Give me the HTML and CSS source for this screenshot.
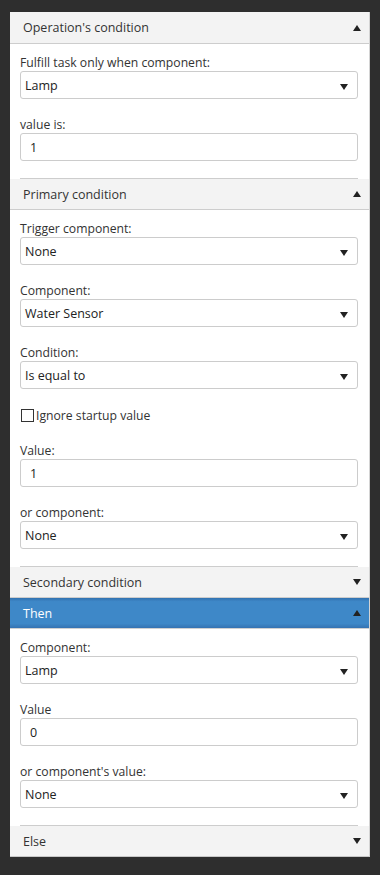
FILE: index.html
```html
<!DOCTYPE html>
<html>
<head>
<meta charset="utf-8">
<link rel="stylesheet" href="styles.css">
</head>
<body>
<div class="panel">
  <div class="hdr first"><span>Operation's condition</span><svg class="caret" width="8" height="6" viewBox="0 0 8 6"><polygon points="4,0 8,6 0,6"/></svg></div>
  <div class="body">
    <div class="fields">
      <div class="field">
        <div class="lbl">Fulfill task only when component:</div>
        <div class="sel"><span>Lamp</span><svg class="dd" width="8" height="6" viewBox="0 0 8 6"><polygon points="0,0 8,0 4,6"/></svg></div>
      </div>
      <div class="field">
        <div class="lbl">value is:</div>
        <div class="inp">1</div>
      </div>
    </div>
  </div>
  <div class="hdr"><span>Primary condition</span><svg class="caret" width="8" height="6" viewBox="0 0 8 6"><polygon points="4,0 8,6 0,6"/></svg></div>
  <div class="body">
    <div class="fields">
      <div class="field">
        <div class="lbl">Trigger component:</div>
        <div class="sel"><span>None</span><svg class="dd" width="8" height="6" viewBox="0 0 8 6"><polygon points="0,0 8,0 4,6"/></svg></div>
      </div>
      <div class="field">
        <div class="lbl">Component:</div>
        <div class="sel"><span>Water Sensor</span><svg class="dd" width="8" height="6" viewBox="0 0 8 6"><polygon points="0,0 8,0 4,6"/></svg></div>
      </div>
      <div class="field">
        <div class="lbl">Condition:</div>
        <div class="sel"><span>Is equal to</span><svg class="dd" width="8" height="6" viewBox="0 0 8 6"><polygon points="0,0 8,0 4,6"/></svg></div>
      </div>
      <div class="field check"><span class="box"></span><span>Ignore startup value</span></div>
      <div class="field">
        <div class="lbl">Value:</div>
        <div class="inp">1</div>
      </div>
      <div class="field">
        <div class="lbl">or component:</div>
        <div class="sel"><span>None</span><svg class="dd" width="8" height="6" viewBox="0 0 8 6"><polygon points="0,0 8,0 4,6"/></svg></div>
      </div>
    </div>
  </div>
  <div class="hdr"><span>Secondary condition</span><svg class="caret" width="8" height="6" viewBox="0 0 8 6"><polygon points="0,0 8,0 4,6"/></svg></div>
  <div class="hdr active"><span>Then</span><svg class="caret" width="8" height="6" viewBox="0 0 8 6"><polygon points="4,0 8,6 0,6"/></svg></div>
  <div class="body">
    <div class="fields">
      <div class="field">
        <div class="lbl">Component:</div>
        <div class="sel"><span>Lamp</span><svg class="dd" width="8" height="6" viewBox="0 0 8 6"><polygon points="0,0 8,0 4,6"/></svg></div>
      </div>
      <div class="field">
        <div class="lbl">Value</div>
        <div class="inp">0</div>
      </div>
      <div class="field">
        <div class="lbl">or component's value:</div>
        <div class="sel"><span>None</span><svg class="dd" width="8" height="6" viewBox="0 0 8 6"><polygon points="0,0 8,0 4,6"/></svg></div>
      </div>
    </div>
  </div>
  <div class="hdr last"><span>Else</span><svg class="caret" width="8" height="6" viewBox="0 0 8 6"><polygon points="0,0 8,0 4,6"/></svg></div>
</div>
</body>
</html>
```
FILE: styles.css
```css
html, body {
  margin: 0;
  padding: 0;
  background: #2e2e2e;
}
body {
  padding: 12px 10px;
  font-family: "Open Sans", "Noto Sans", sans-serif;
  font-size: 12.2px;
  color: #333;
}
.panel {
  width: 360px;
  box-sizing: border-box;
  background: #fff;
  border-right: 1px solid #d4d4d4;
  border-bottom: 1px solid #c8c8c8;
}
.hdr {
  height: 30px;
  box-sizing: content-box;
  background: #f3f3f3;
  border-bottom: 1px solid #cdcdcd;
  display: flex;
  align-items: center;
  justify-content: space-between;
  padding: 0 8px 0 13px;
  color: #333;
  font-size: 12.5px;
}
.hdr.first {
  height: 31px;
}
.hdr.last {
  border-bottom: none;
  height: 30px;
}
.hdr.active {
  background: linear-gradient(#3271b0, #3e88c8 12%, #3e88c8 85%, #3573b2);
  color: #fff;
  border-bottom-color: #d0d0d0;
}
.caret polygon { fill: #222; }
.dd polygon { fill: #222; }
.body {
  padding: 10px 11px 0 10px;
}
.fields {
  border-bottom: 1px solid #cdcdcd;
}
.field {
  margin-bottom: 17px;
}
.lbl {
  height: 17px;
  line-height: 17px;
  white-space: nowrap;
}
.sel, .inp {
  height: 28px;
  box-sizing: border-box;
  border: 1px solid #cccccc;
  border-radius: 3px;
  display: flex;
  align-items: center;
  font-size: 12.5px;
  color: #222;
}
.sel {
  justify-content: space-between;
  padding: 0 9px 0 4px;
}
.sel .dd {
  margin-top: 4px;
}
.inp {
  padding: 0 9px;
}
.check {
  height: 19px;
  display: flex;
  align-items: center;
}
.check .box {
  width: 13px;
  height: 13px;
  box-sizing: border-box;
  border: 1px solid #333;
  margin-left: 1px;
  margin-right: 2px;
}
```
